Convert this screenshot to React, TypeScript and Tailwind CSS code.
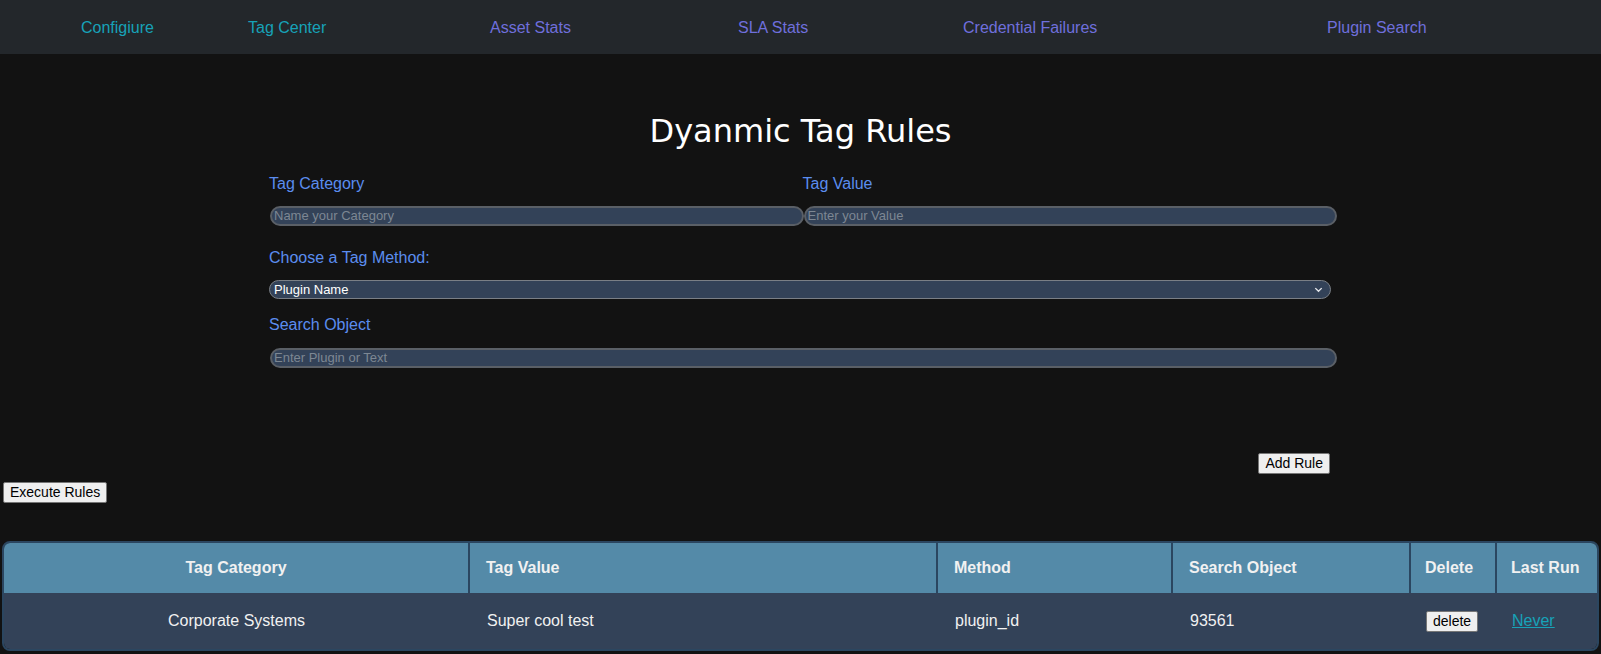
import React from 'react';

const navLinks = [
  { label: 'Configiure', w: 'w-[167px]', color: 'text-[#17a2b8]' },
  { label: 'Tag Center', w: 'w-[242px]', color: 'text-[#17a2b8]' },
  { label: 'Asset Stats', w: 'w-[248px]', color: 'text-[#6f6fdc]' },
  { label: 'SLA Stats', w: 'w-[225px]', color: 'text-[#6f6fdc]' },
  { label: 'Credential Failures', w: 'w-[364px]', color: 'text-[#6f6fdc]' },
  { label: 'Plugin Search', w: '', color: 'text-[#6f6fdc]' },
];

const inputCls =
  'ml-[3px] w-full h-[20px] rounded-[10px] border-2 border-[#5a5f66] bg-[#334258] px-[2px] text-[13px] text-white placeholder:text-[#7d8793] outline-none';

const btnCls =
  'h-[21px] px-[6px] rounded-[2px] border border-[#767676] bg-[#efefef] text-[14px] leading-[19px] text-black';

const App: React.FC = () => {
  return (
    <div className="min-h-[654px] bg-[#121212] font-['Liberation_Sans',Arial,sans-serif] text-white">
      <nav className="h-[54px] bg-[#23272b] flex items-center pt-[2px] pl-[81px] text-[16px]">
        {navLinks.map((l) => (
          <a key={l.label} href="#" className={`${l.w} ${l.color}`}>
            {l.label}
          </a>
        ))}
      </nav>

      <section className="w-[1067px] ml-[267px]">
        <h1 className="mt-[55px] text-center font-['DejaVu_Sans',sans-serif] text-[32px] leading-[44px] text-white">
          Dyanmic Tag Rules
        </h1>

        <div className="mt-[21px] grid grid-cols-2">
          <div>
            <label className="block pl-[2px] text-[16px] leading-[20px] text-[#5b8def]">Tag Category</label>
            <div className="mt-[9px]">
              <input className={inputCls} placeholder="Name your Category" />
            </div>
          </div>
          <div>
            <label className="block pl-[2px] text-[16px] leading-[20px] text-[#5b8def]">Tag Value</label>
            <div className="mt-[9px]">
              <input className={inputCls} placeholder="Enter your Value" />
            </div>
          </div>
        </div>

        <label className="mt-[21px] block pl-[2px] text-[16px] leading-[20px] text-[#5b8def]">
          Choose a Tag Method:
        </label>
        <div className="mt-[12px] ml-[2px] w-[1062px] h-[19px] rounded-[10px] border border-[#7a7f86] bg-[#334258] flex items-center justify-between pl-[4px] pr-[6px] text-[13px] text-white">
          <span>Plugin Name</span>
          <svg width="11" height="11" viewBox="0 0 12 12" fill="none" stroke="#e5e7eb" strokeWidth="1.5">
            <path d="M2.5 4.5 L6 8 L9.5 4.5" />
          </svg>
        </div>

        <label className="mt-[16px] block pl-[2px] text-[16px] leading-[20px] text-[#5b8def]">Search Object</label>
        <div className="mt-[10px]">
          <input className={inputCls} placeholder="Enter Plugin or Text" />
        </div>

        <div className="mt-[84px] w-[1063px] flex justify-end">
          <button className={btnCls}>Add Rule</button>
        </div>
      </section>

      <div className="mt-[6px] pl-[3px]">
        <button className={btnCls}>Execute Rules</button>
      </div>

      <div className="mt-[37px] mx-[2px] rounded-[8px] overflow-hidden border-2 border-[#2b4660]">
        <table className="w-full border-collapse text-[16px]">
          <thead>
            <tr className="h-[50px] bg-[#548aa8] font-bold text-[#f1f1f1]">
              <th className="w-[465px] text-center">Tag Category</th>
              <th className="w-[468px] border-l-2 border-[#2b4660] pl-[16px] text-left">Tag Value</th>
              <th className="w-[235px] border-l-2 border-[#2b4660] pl-[16px] text-left">Method</th>
              <th className="w-[238px] border-l-2 border-[#2b4660] pl-[16px] text-left">Search Object</th>
              <th className="w-[86px] border-l-2 border-[#2b4660] pl-[14px] text-left">Delete</th>
              <th className="border-l-2 border-[#2b4660] pl-[14px] text-left">Last Run</th>
            </tr>
          </thead>
          <tbody>
            <tr className="h-[56px] bg-[#334258] text-[#f1f1f1]">
              <td className="text-center">Corporate Systems</td>
              <td className="pl-[18px]">Super cool test</td>
              <td className="pl-[18px]">plugin_id</td>
              <td className="pl-[18px]">93561</td>
              <td className="pl-[16px]">
                <button className={btnCls}>delete</button>
              </td>
              <td className="pl-[16px]">
                <a href="#" className="text-[#17a2b8] underline">Never</a>
              </td>
            </tr>
          </tbody>
        </table>
      </div>
    </div>
  );
};

export default App;
